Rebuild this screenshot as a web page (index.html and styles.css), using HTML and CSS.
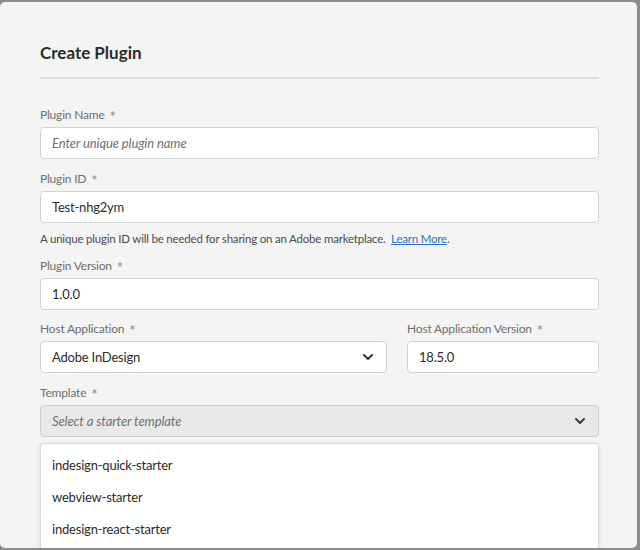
FILE: index.html
```html
<!DOCTYPE html>
<html>
<head>
<meta charset="utf-8">
<link rel="stylesheet" href="styles.css">
</head>
<body>
<div class="dialog">
  <h1 class="title">Create Plugin</h1>
  <div class="divider"></div>

  <div class="field first">
    <label class="label">Plugin Name <span class="req">*</span></label>
    <div class="input placeholder">Enter unique plugin name</div>
  </div>

  <div class="field">
    <label class="label">Plugin ID <span class="req">*</span></label>
    <div class="input">Test-nhg2ym</div>
  </div>
  <p class="help">A unique plugin ID will be needed for sharing on an Adobe marketplace. &nbsp;<a class="link">Learn More</a>.</p>

  <div class="field tight">
    <label class="label">Plugin Version <span class="req">*</span></label>
    <div class="input">1.0.0</div>
  </div>

  <div class="row">
    <div class="field grow">
      <label class="label">Host Application <span class="req">*</span></label>
      <div class="input select">
        <span>Adobe InDesign</span>
        <svg class="chev" width="12" height="8" viewBox="0 0 12 8"><path d="M2 2 L6 6 L10 2" fill="none" stroke="#3a3a3a" stroke-width="2" stroke-linecap="round" stroke-linejoin="round"/></svg>
      </div>
    </div>
    <div class="field side">
      <label class="label">Host Application Version <span class="req">*</span></label>
      <div class="input">18.5.0</div>
    </div>
  </div>

  <div class="field">
    <label class="label">Template <span class="req">*</span></label>
    <div class="input select disabled">
      <span class="placeholder">Select a starter template</span>
      <svg class="chev" width="12" height="8" viewBox="0 0 12 8"><path d="M2 2 L6 6 L10 2" fill="none" stroke="#3a3a3a" stroke-width="2" stroke-linecap="round" stroke-linejoin="round"/></svg>
    </div>
  </div>

  <ul class="menu">
    <li>indesign-quick-starter</li>
    <li>webview-starter</li>
    <li>indesign-react-starter</li>
  </ul>
</div>
</body>
</html>
```

FILE: styles.css
```css
html, body {
  margin: 0;
  padding: 0;
}
body {
  background: #8c8c8c;
  width: 640px;
  height: 550px;
  overflow: hidden;
  font-family: "Lato", "Open Sans", sans-serif;
  color: #2c2c2c;
}
.dialog {
  box-sizing: border-box;
  margin-top: 2px;
  width: 637px;
  height: 546px;
  background: #f4f4f4;
  border-radius: 5px;
  padding: 38px 38px 0 40px;
  overflow: hidden;
}
.title {
  margin: 0;
  font-size: 17px;
  line-height: 26px;
  font-weight: 700;
  color: #2c2c2c;
}
.divider {
  margin-top: 11px;
  height: 2px;
  background: #dedede;
}
.field {
  margin-top: 11px;
}
.field.first {
  margin-top: 27px;
}
.field.tight {
  margin-top: 9px;
}
.label {
  display: block;
  font-size: 12px;
  line-height: 18px;
  height: 18px;
  color: #6e6e6e;
  margin-bottom: 3px;
  letter-spacing: -0.2px;
}
.req {
  margin-left: 2px;
  font-size: 15px;
  line-height: 0;
  vertical-align: -3px;
  color: #858585;
}
.input {
  box-sizing: border-box;
  height: 32px;
  background: #ffffff;
  border: 1px solid #d3d3d3;
  border-radius: 4px;
  padding: 0 11px;
  font-size: 13px;
  line-height: 30px;
  color: #2c2c2c;
  letter-spacing: -0.2px;
}
.placeholder {
  font-style: italic;
  color: #707070;
  letter-spacing: -0.1px;
}
.help {
  margin: 7px 0 0;
  font-size: 11.5px;
  line-height: 18px;
  height: 18px;
  color: #4b4b4b;
  letter-spacing: -0.2px;
}
.link {
  color: #2d6fcc;
  text-decoration: underline;
}
.row {
  display: flex;
  gap: 20px;
}
.row .field {
  margin-top: 10px;
}
.grow {
  flex: 0 0 347px;
}
.side {
  flex: 1;
}
.select {
  display: flex;
  align-items: center;
  justify-content: space-between;
  padding-right: 12px;
}
.select.disabled {
  background: #e9e9e9;
  border-color: #cdcdcd;
}
.chev {
  flex: none;
}
.menu {
  list-style: none;
  margin: 6px 0 0;
  padding: 5px 0 0;
  height: 110px;
  background: #ffffff;
  border: 1px solid #dadada;
  border-radius: 4px;
  box-shadow: 0 1px 4px rgba(0,0,0,0.12);
}
.menu li {
  height: 32px;
  line-height: 32px;
  padding-left: 11px;
  font-size: 13px;
  color: #2c2c2c;
  letter-spacing: -0.2px;
}
```
